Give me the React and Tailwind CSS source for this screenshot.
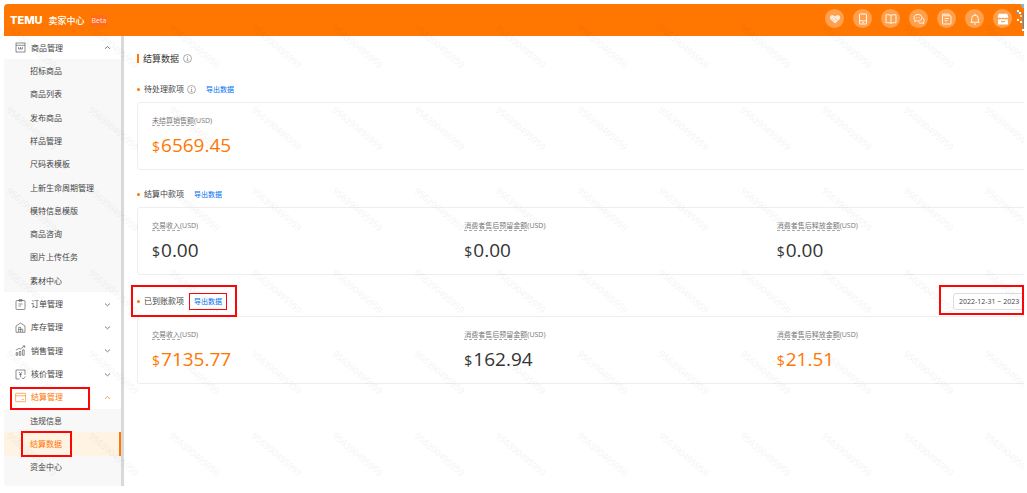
import { useId } from 'react';

const NAV = [
    { label: '商品管理', icon: 'goods', open: true },
    { label: '招标商品', child: true },
    { label: '商品列表', child: true },
    { label: '发布商品', child: true },
    { label: '样品管理', child: true },
    { label: '尺码表模板', child: true },
    { label: '上新生命周期管理', child: true },
    { label: '模特信息模版', child: true },
    { label: '商品咨询', child: true },
    { label: '图片上传任务', child: true },
    { label: '素材中心', child: true },
    { label: '订单管理', icon: 'order' },
    { label: '库存管理', icon: 'stock' },
    { label: '销售管理', icon: 'sales' },
    { label: '核价管理', icon: 'price' },
    { label: '结算管理', icon: 'settle', open: true, current: true, marked: true },
    { label: '违规信息', child: true },
    { label: '结算数据', child: true, current: true, marked: true },
    { label: '资金中心', child: true },
];

const NAV_ICONS = {
    goods: <><rect x="1" y="1" width="9" height="9" /><path d="M1 3.3h9M3.600 5v2h1.900V5M5.500 7h1.900V5" /></>,
    order: <><rect x="1" y="1.5" width="9" height="9" rx="1" /><path d="M4 .6h3v1.6H4zM3.5 5h4M3.5 7h2.5" /></>,
    stock: <><path d="M1 10.3V4L5.5 1 10 4v6.3z" /><path d="M3.7 10V5.3h2V10M5.7 7.3h2V10M3.7 7.6h2" /></>,
    sales: <><path d="M1.2 10.3V7.6h1.5v2.7zM4.3 10.3V6.4h1.5v3.9zM7.6 10.3V4.8h1.6v5.5z" /><path d="M.8 5.3 4 3.4l1.5.5L9.6 1M7.6.9h2.2v2" /></>,
    price: <><path d="M4.5 10H1V1h9v5" /><path d="m4 3 1.5 2L7 3M5.5 5v3M4.2 5.6h2.6M7 8.6 8.2 10 10.4 7.4" /></>,
    settle: <><rect x=".6" y="1.3" width="10" height="8.4" rx=".6" /><path d="M.6 3.8h10M6.6 7.4h2.2" /></>,
};

const HEADER_ICONS = [
    { name: '合作', art: <><path d="M6 10.4 1.4 6.2C.2 4.700 1 2.200 3 2.200c1.400 0 2.200.5 3 1.300.8-.8 1.600-1.300 3-1.300 2 0 2.800 2.500 1.600 4z" fill="currentColor" fillOpacity=".8" stroke="none" /><path d="m3 5.500 2.500 2.500M5.500 4.500l3 3" stroke="#fda04f" strokeWidth=".6" /></> },
    { name: '手机端', art: <><rect x="2.500" y="1" width="7" height="10" rx=".8" /><path d="M2.500 7.800h7M5.200 9.400h1.600" /></> },
    { name: '学习', art: <path d="M6 2.500C5 1.600 3 1.600 1 1.800v8c2-.2 4-.2 5 .6 1-.8 3-.8 5-.6v-8c-2-.2-4-.2-5 .7zv7.900" /> },
    { name: '客服', art: <><path d="M5 1.500c2.400 0 4 1.400 4 3.300S7.400 8 5 8c-.6 0-1 0-1.500-.2L1.600 8.600 2 7C1.300 6.400 1 5.600 1 4.800c0-1.900 1.600-3.300 4-3.300zM2.900 4.800h.8M4.600 4.800h.8M6.300 4.800h.8" /><path d="M9.800 5c.9.500 1.400 1.300 1.400 2.200 0 .8-.3 1.400-.8 1.900l.3 1.400-1.600-.6c-1.200.4-2.700.2-3.500-.5" /></> },
    { name: '公告', art: <><rect x="1.500" y="2.800" width="8.500" height="8.200" rx=".6" /><path d="M1.600 2.800V1.200h6.200l.8 1.500M3.600 5.500h4.400M3.600 7.800h3" /></> },
    { name: '通知', art: <><path d="M1.500 9.300h9M2.700 9.200V5.500a3.300 3.300 0 0 1 6.600 0v3.700M6 2V.8M5 11h2" /></> },
    { name: '店铺', art: <><path d="M1.800.8h8.400l1.200 3.500c-.4 1-1.600 1-2.200.3-.8.8-2.200.8-3.200 0-1 .8-2.400.8-3.200 0-.6.7-1.800.7-2.200-.3z" fill="currentColor" stroke="none" /><path d="M1 6.200h10v5.200H1z" fill="currentColor" stroke="none" /><path d="M4.200 8.200c1 .8 2.600.8 3.600 0" stroke="#fb7701" /></> },
];

const SECTIONS = [
    {
        title: '待处理款项',
        info: true,
        items: [{ label: '未结算销售额', amount: '6569.45', highlight: true }],
    },
    {
        title: '结算中款项',
        items: [
            { label: '交易收入', amount: '0.00' },
            { label: '消费者售后预留金额', amount: '0.00' },
            { label: '消费者售后释放金额', amount: '0.00' },
        ],
    },
    {
        title: '已到账款项',
        range: '2022-12-31 ~ 2023',
        marked: true,
        items: [
            { label: '交易收入', amount: '7135.77', highlight: true },
            { label: '消费者售后预留金额', amount: '162.94' },
            { label: '消费者售后释放金额', amount: '21.51', highlight: true },
        ],
    },
];

// Red frame drawn over the thing it points at
const Mark = ({ className }) => (
    <span aria-hidden="true" className={`absolute z-20 pointer-events-none border-[#fb0505] ${className}`} />
);

const InfoIcon = () => (
    <svg className="w-[9px] h-[9px] text-[#777]" viewBox="0 0 9 9" fill="none" stroke="currentColor" strokeWidth=".6">
        <circle cx="4.500" cy="4.500" r="4" />
        <path d="M4.500 2.100v.9M3.800 4h.8v2.500M3.600 6.600h1.900" />
    </svg>
);

const Watermark = () => {
    const id = useId();
    const spots = [[5, 29], [87, 29], [5, 111], [87, 111]];
    return (
        <svg aria-hidden="true" className="absolute inset-0 z-10 w-full h-full pointer-events-none">
            <defs>
                <pattern id={id} x="-3" y="-4" width="163" height="163" patternUnits="userSpaceOnUse">
                    {spots.map(([x, y]) => (
                        <text
                            key={`${x}-${y}`}
                            transform={`translate(${x} ${y}) rotate(40)`}
                            className="text-[9px] fill-black/5"
                        >
                            956390495959
                        </text>
                    ))}
                </pattern>
            </defs>
            <rect width="100%" height="100%" fill={`url(#${id})`} />
        </svg>
    );
};

const Header = () => (
    <header className="h-8 shrink-0 flex items-center pl-1.5 bg-[#ff7700] text-white rounded-tl overflow-hidden">
        <span className="font-[Inter] font-extrabold text-[11px] leading-none">TEMU</span>
        <span className="ml-1.5 text-[9px] leading-none font-medium">卖家中心</span>
        <span className="ml-1.5 px-px h-[11px] flex items-center rounded-[2px] bg-[#ff6a1c] text-[7px] leading-none text-[#ffe9dc]">Beta</span>
        <div className="ml-auto flex items-center gap-[9px]">
            {HEADER_ICONS.map((item) => (
                <button
                    key={item.name}
                    aria-label={item.name}
                    className="w-[19px] h-[19px] mb-[3px] rounded-full bg-white/30 flex items-center justify-center"
                >
                    <svg className="w-3 h-3" viewBox="0 0 12 12" fill="none" stroke="currentColor" strokeWidth=".9">{item.art}</svg>
                </button>
            ))}
        </div>
        {/* Avatar, cut off by the window edge */}
        <svg className="ml-1 w-2 h-8" viewBox="0 0 8 32" aria-hidden="true">
            <path d="M5 0h3v4H6V2H5z" fill="#8fb4d4" />
            <path d="M7 9h1v18H7z" fill="#4b8fd0" />
            <path d="M1 6h2v2H1zM3 8h2v2H3zM1 15h2v2H1zM4 17h2v2H4zM6 25h2v2H6z" fill="#fff" />
            <path d="M1 8h2v2H1z" fill="#6fa3cf" />
            <path d="M4 11h2v2H4z" fill="#ffd9a8" />
        </svg>
    </header>
);

const NavRow = ({ item }) => {
    const color = item.current ? 'text-[#ff7700]' : 'text-[#444]';

    if (item.child) {
        return (
            <li className={`relative flex items-center ${item.current ? 'bg-[#fff3e3] border-r-2 border-[#ff7700]' : 'bg-[#f8f8f8]'}`}>
                <a href="#" className={`pl-[26px] text-[8px] leading-none ${color}`}>{item.label}</a>
                {item.marked && <Mark className="left-[17px] w-[51px] -inset-y-px border-2" />}
            </li>
        );
    }

    return (
        <li className="relative flex bg-white">
            <button aria-expanded={!!item.open} className={`w-full flex items-center pl-[11px] pr-2.5 text-[8px] leading-none ${color}`}>
                <svg className="w-[11px] h-[11px] mr-[5px]" viewBox="0 0 11 11" fill="none" stroke="currentColor" strokeWidth=".6">
                    {NAV_ICONS[item.icon]}
                </svg>
                {item.label}
                <svg className="ml-auto w-[7px] h-[7px]" viewBox="0 0 7 7" fill="none" stroke="currentColor" strokeWidth=".7">
                    <path d={item.open ? 'M1 4.800 3.500 2.500 6 4.800' : 'M1 2.500 3.500 4.800 6 2.500'} />
                </svg>
            </button>
            {item.marked && <Mark className="left-1.5 w-20 top-px -bottom-px border-2" />}
        </li>
    );
};

const Section = ({ section }) => (
    <section>
        <div className={`relative flex items-center mb-[7px] ${section.range ? 'h-4' : 'h-3'}`}>
            <span className="w-[3px] h-[3px] rounded-full bg-[#ff7700] mr-1" />
            <h2 className="text-[8px] leading-none text-[#444]">{section.title}</h2>
            {section.info && <span className="ml-[3px]"><InfoIcon /></span>}
            <a href="#" className="relative ml-2.5 text-[7px] leading-none text-[#0071f3]">
                导出数据
                {section.marked && <Mark className="-inset-x-[5px] -inset-y-[5px] border" />}
            </a>
            {section.range && (
                <input
                    aria-label="日期范围"
                    readOnly
                    defaultValue={section.range}
                    className="ml-auto w-[151px] h-[17px] px-[5px] border border-[#ddd] rounded-[3px] text-[7px] text-[#444] bg-white outline-none"
                />
            )}
            {section.marked && <Mark className="-left-1.5 w-[106px] -inset-y-2 border-2" />}
            {section.marked && <Mark className="right-20 w-[85px] -top-2 -bottom-1.5 border-2" />}
        </div>
        <div className="h-[68px] grid grid-cols-3 px-3.5 pt-[13px] border border-[#eee] rounded-[3px]">
            {section.items.map((item) => (
                <div key={item.label}>
                    <div className="text-[7px] leading-[9px] text-[#777]">
                        <span className="inline-block border-b border-dashed border-[#aaa]">{item.label}</span>
                        (USD)
                    </div>
                    <div className={`mt-1.5 text-[19px] leading-[26px] ${item.highlight ? 'text-[#ff7700]' : 'text-[#333]'}`}>
                        <span className="text-sm mr-px">$</span>
                        {item.amount}
                    </div>
                </div>
            ))}
        </div>
    </section>
);

export default function App() {
    return (
        <div className="min-h-screen flex flex-col pt-1 pl-1 pr-[3px] pb-[7px] bg-white font-['Open_Sans','Noto_Sans_CJK_SC',sans-serif]">
            <div className="relative flex-1 flex flex-col overflow-hidden">
                <Header />
                <div className="flex-1 flex">
                    <nav className="w-[117px] shrink-0 flex flex-col pb-[7px] bg-[#f8f8f8] rounded-bl">
                        <ul className="flex-1 grid auto-rows-fr">
                            {NAV.map((item, index) => <NavRow key={index} item={item} />)}
                        </ul>
                    </nav>
                    <div className="w-[3px] shrink-0 bg-[#d9d9d9]" />
                    <main className="flex-1 min-w-0 pl-[13px] pt-4">
                        <h1 className="flex items-center h-3 mb-[19px] text-[9px] leading-none text-[#333]">
                            <span className="w-0.5 h-[9px] bg-[#ff7700] mr-1" />
                            结算数据
                            <span className="ml-1"><InfoIcon /></span>
                        </h1>
                        <div className="-mr-20 flex flex-col gap-[18px]">
                            {SECTIONS.map((section) => <Section key={section.title} section={section} />)}
                        </div>
                    </main>
                </div>
                <Watermark />
            </div>
        </div>
    );
}
